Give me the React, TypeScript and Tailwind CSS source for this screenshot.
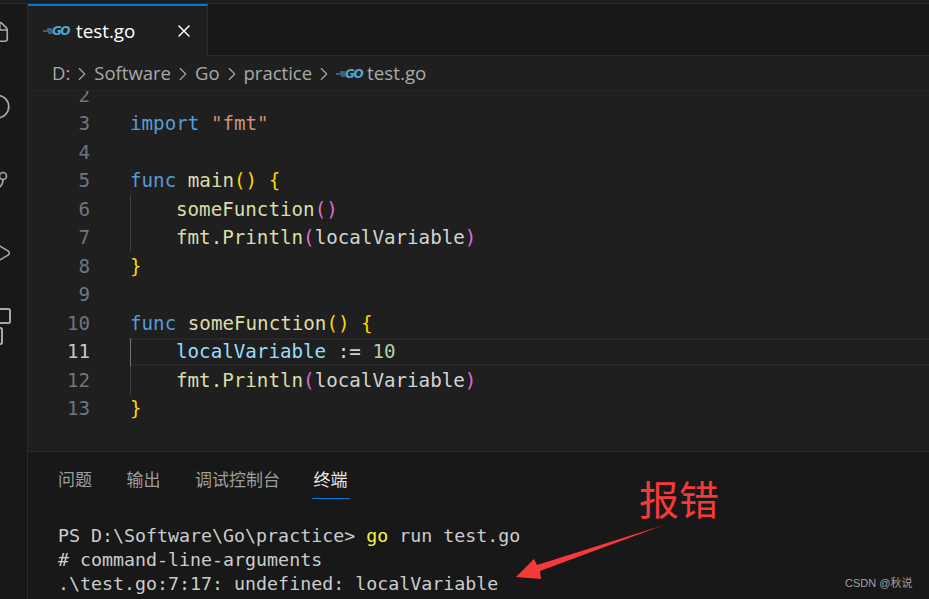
import { ChevronRight, Files, GitBranch, Play, Search, X } from "lucide-react";
import type { ReactNode } from "react";

const mono = "font-['DejaVu_Sans_Mono','Noto_Sans_CJK_SC',monospace]";

function GoIcon() {
    return (
        <span className="flex w-[26px] shrink-0 items-center text-[#4fa8d0]">
            <svg width="9" height="6" viewBox="0 0 9 6" className="shrink-0">
                <path d="M0 3h9M4 1h5M5 5h4" stroke="currentColor" strokeWidth="1" fill="none" />
            </svg>
            <span className="font-['DejaVu_Sans',sans-serif] text-[12px] font-bold italic leading-none tracking-[-1.5px]">
                GO
            </span>
        </span>
    );
}

const K = ({ children }: { children: ReactNode }) => <span className="text-[#569cd6]">{children}</span>;
const F = ({ children }: { children: ReactNode }) => <span className="text-[#dcdcaa]">{children}</span>;
const Y = ({ children }: { children: ReactNode }) => <span className="text-[#ffd700]">{children}</span>;
const M = ({ children }: { children: ReactNode }) => <span className="text-[#da70d6]">{children}</span>;
const V = ({ children }: { children: ReactNode }) => <span className="text-[#9cdcfe]">{children}</span>;

function PrintLine() {
    return (
        <>
            <F>fmt.Println</F>
            <M>(</M>
            <span className="text-[#d4d4d4]">localVariable</span>
            <M>)</M>
        </>
    );
}

function Line({
    n,
    guide,
    active,
    children,
}: {
    n: number;
    guide?: boolean;
    active?: boolean;
    children?: ReactNode;
}) {
    return (
        <div className="flex h-[28.5px] items-center leading-none">
            <div className={`w-[62px] shrink-0 text-right ${active ? "text-[#c6c6c6]" : "text-[#6e7681]"}`}>{n}</div>
            <div
                className={`ml-[40px] flex h-full flex-1 items-center ${active ? "border-y-2 border-[#282828]" : ""}`}
            >
                {guide ? (
                    <span className={`flex h-[28.5px] w-[46px] shrink-0 ${active ? "-my-[2px]" : ""}`}>
                        <span className={`h-full w-px ${active ? "bg-[#707070]" : "bg-[#404040]"}`} />
                    </span>
                ) : null}
                <span className="whitespace-pre">{children}</span>
            </div>
        </div>
    );
}

function Crumb({ children }: { children: ReactNode }) {
    return (
        <>
            <span>{children}</span>
            <ChevronRight size={22} strokeWidth={1.2} className="mx-[1px] shrink-0 text-[#a9a9a9]" />
        </>
    );
}

export default function App() {
    return (
        <div className="relative flex h-[599px] w-[929px] flex-col overflow-hidden bg-[#181818] font-['Open_Sans','Noto_Sans_CJK_SC',sans-serif]">
            <div className="h-[4px] shrink-0 border-b border-[#2b2b2b] bg-[#1c1c1c]" />

            <div className="flex min-h-0 flex-1">
                <aside className="flex w-[28px] shrink-0 flex-col overflow-hidden border-r border-[#2b2b2b] text-[#a8a8a8]">
                    <Files size={30} strokeWidth={1.3} className="ml-[-19px] mt-[15.5px] shrink-0" />
                    <Search size={34} strokeWidth={1.2} className="ml-[-21px] mt-[41.5px] shrink-0 scale-x-[-1]" />
                    <GitBranch size={28} strokeWidth={1.4} className="ml-[-18px] mt-[44px] shrink-0" />
                    <Play size={30} strokeWidth={1.3} className="ml-[-17px] mt-[41px] shrink-0" />
                    <svg width="12" height="38" viewBox="0 0 12 38" fill="none" stroke="currentColor" strokeWidth="2" className="mt-[40px] shrink-0">
                        <rect x="-6" y="1" width="16" height="14" rx="1.5" />
                        <rect x="-8" y="20" width="10" height="16" rx="1.5" />
                    </svg>
                </aside>

                <main className="flex min-w-0 flex-1 flex-col">
                    <div className="flex h-[52px] shrink-0">
                        <div className="flex w-[180px] items-center border-r border-t-2 border-r-[#2b2b2b] border-t-[#0078d4] bg-[#1f1f1f] pl-[15px] pr-[13px]">
                            <GoIcon />
                            <span className="ml-[7px] text-[18.8px] leading-none text-white">test.go</span>
                            <X size={20} strokeWidth={1.8} className="ml-auto text-white" />
                        </div>
                        <div className="flex-1 border-b border-[#2b2b2b]" />
                    </div>

                    <div className="flex h-[34px] shrink-0 items-center bg-[#1f1f1f] pl-[24px] pt-[1px] text-[18.5px] leading-none text-[#a9a9a9]">
                        <Crumb>D:</Crumb>
                        <Crumb>Software</Crumb>
                        <Crumb>Go</Crumb>
                        <Crumb>practice</Crumb>
                        <GoIcon />
                        <span className="ml-[5px] text-[18.8px]">test.go</span>
                    </div>

                    <div className={`${mono} h-[361px] shrink-0 overflow-hidden border-t border-[#262626] bg-[#1f1f1f] text-[19.2px]`}>
                        <div className="-mt-[10px]">
                            <Line n={2} />
                            <Line n={3}>
                                <K>import</K> <span className="text-[#ce9178]">"fmt"</span>
                            </Line>
                            <Line n={4} />
                            <Line n={5}>
                                <K>func</K> <F>main</F>
                                <Y>()</Y> <Y>{"{"}</Y>
                            </Line>
                            <Line n={6} guide>
                                <F>someFunction</F>
                                <M>()</M>
                            </Line>
                            <Line n={7} guide>
                                <PrintLine />
                            </Line>
                            <Line n={8}>
                                <Y>{"}"}</Y>
                            </Line>
                            <Line n={9} />
                            <Line n={10}>
                                <K>func</K> <F>someFunction</F>
                                <Y>()</Y> <Y>{"{"}</Y>
                            </Line>
                            <Line n={11} guide active>
                                <V>localVariable</V>
                                <span className="text-[#d4d4d4]"> := </span>
                                <span className="text-[#b5cea8]">10</span>
                            </Line>
                            <Line n={12} guide>
                                <PrintLine />
                            </Line>
                            <Line n={13}>
                                <Y>{"}"}</Y>
                            </Line>
                        </div>
                    </div>

                    <section className="flex min-h-0 flex-1 flex-col border-t border-[#2b2b2b] pl-[30px]">
                        <nav className="flex h-[47px] shrink-0 gap-[34.5px] pt-[17px] text-[17px] leading-[22px] text-[#9d9d9d]">
                            <span>问题</span>
                            <span>输出</span>
                            <span>调试控制台</span>
                            <span className="-ml-[3px] h-[30px] border-b border-[#0078d4] px-[2px] text-[#e7e7e7]">终端</span>
                        </nav>
                        <div className={`${mono} pt-[25px] text-[18.3px] leading-[24px] whitespace-pre text-[#cccccc]`}>
                            <div>
                                PS D:\Software\Go\practice&gt; <span className="text-[#f5f543]">go</span> run test.go
                            </div>
                            <div># command-line-arguments</div>
                            <div>.\test.go:7:17: undefined: localVariable</div>
                        </div>
                    </section>
                </main>
            </div>

            <span className="absolute left-[639px] top-[475px] font-['Noto_Sans_CJK_SC',sans-serif] text-[40px] leading-[46px] text-[#f63a3a]">
                报错
            </span>
            <svg width="929" height="599" className="pointer-events-none absolute left-0 top-0">
                <polygon points="516,577 534,559 537,565 664,525 540,571 541,579" fill="#f63a3a" />
            </svg>
            <span className="absolute left-[845px] top-[575px] font-['Liberation_Sans','Noto_Sans_CJK_SC',sans-serif] text-[11px] leading-[16px] text-[#a0a0a0]">
                CSDN @秋说
            </span>
        </div>
    );
}
